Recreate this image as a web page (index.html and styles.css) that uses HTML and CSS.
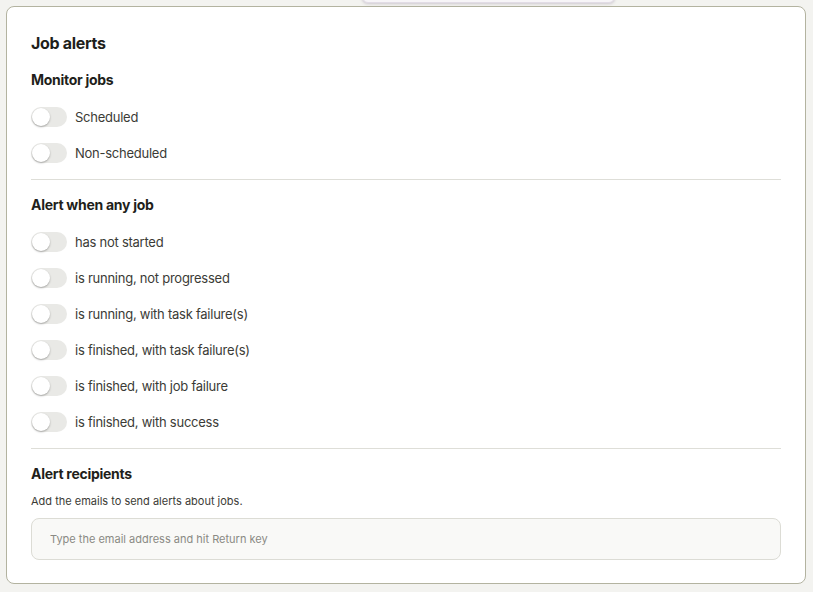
FILE: index.html
```html
<!DOCTYPE html>
<html>
<head>
	<title>Job alerts</title>
	<meta name="viewport" content="width=device-width, user-scalable=no" />
	<link rel="stylesheet" href="styles.css">
</head>
<body>
<div class="popover"></div>

<div class="card">
	<h2 class="title">Job alerts</h2>

	<h3 class="heading">Monitor jobs</h3>
	<label class="row"><span class="toggle"><span class="knob"></span></span>Scheduled</label>
	<label class="row"><span class="toggle"><span class="knob"></span></span>Non-scheduled</label>

	<hr class="divider" />

	<h3 class="heading">Alert when any job</h3>
	<label class="row"><span class="toggle"><span class="knob"></span></span>has not started</label>
	<label class="row"><span class="toggle"><span class="knob"></span></span>is running, not progressed</label>
	<label class="row"><span class="toggle"><span class="knob"></span></span>is running, with task failure(s)</label>
	<label class="row"><span class="toggle"><span class="knob"></span></span>is finished, with task failure(s)</label>
	<label class="row"><span class="toggle"><span class="knob"></span></span>is finished, with job failure</label>
	<label class="row"><span class="toggle"><span class="knob"></span></span>is finished, with success</label>

	<hr class="divider" />

	<h3 class="heading">Alert recipients</h3>
	<p class="hint">Add the emails to send alerts about jobs.</p>
	<div class="email">Type the email address and hit Return key</div>
</div>
</body>
</html>
```

FILE: styles.css
```css
* {
  box-sizing: border-box;
}

body {
  margin: 0;
  padding: 6px 7px 8px 6px;
  background-color: #f3f3f0;
  font-family: Inter, "Noto Sans", sans-serif;
  color: #1f1f1b;
}

/* bottom edge of a menu that hangs over the page */
.popover {
  position: absolute;
  top: -20px;
  left: 362px;
  width: 253px;
  height: 23px;
  background-color: #f7f5f8;
  border: 1px solid #e2dce6;
  border-radius: 6px;
  box-shadow: 0 1px 3px rgba(90, 70, 110, 0.25);
}

.card {
  display: flex;
  flex-direction: column;
  background-color: #fff;
  border: 1px solid #b3b3a0;
  border-radius: 8px;
  padding: 24px 24px 23px 24px;
}

.title {
  margin: 0;
  font-size: 16px;
  line-height: 24px;
  font-weight: 700;
  letter-spacing: -0.3px;
}

.heading {
  margin: 15px 0 9px 0;
  font-size: 14px;
  line-height: 20px;
  font-weight: 700;
  letter-spacing: -0.28px;
}

.row {
  display: flex;
  align-items: center;
  gap: 8px;
  height: 36px;
  font-size: 13px;
  letter-spacing: -0.25px;
  color: #3b3b36;
}

.toggle {
  position: relative;
  width: 36px;
  height: 20px;
  border-radius: 10px;
  background-color: #e9e9e6;
}

.knob {
  position: absolute;
  top: 1px;
  left: 1px;
  width: 18px;
  height: 18px;
  border-radius: 50%;
  background-color: #fff;
  box-shadow: 0 1px 2px rgba(0, 0, 0, 0.3);
}

.divider {
  width: 100%;
  margin: 8px 0 0 0;
  border: 0;
  border-top: 1px solid #deded8;
}

.hint {
  margin: 0;
  font-size: 11px;
  line-height: 16px;
  color: #3b3b36;
}

.email {
  margin-top: 9px;
  height: 42px;
  padding: 0 18px;
  display: flex;
  align-items: center;
  background-color: #f9f9f7;
  border: 1px solid #dcdcd5;
  border-radius: 8px;
  font-size: 11px;
  color: #8a8a84;
}
```
